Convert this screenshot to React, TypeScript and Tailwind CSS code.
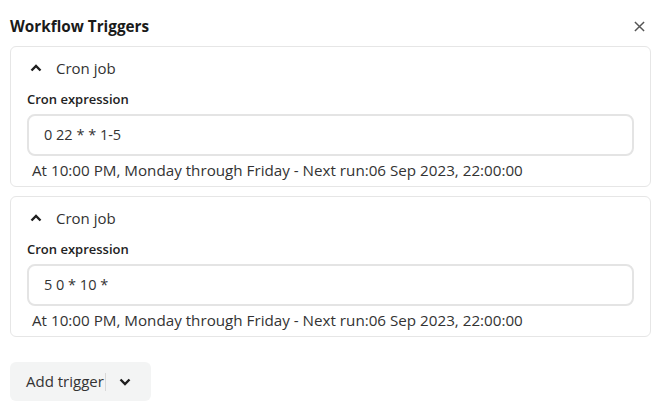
function ChevronUp({ className }: { className?: string }) {
  return (
    <svg viewBox="0 0 12 8" className={className} fill="none" stroke="currentColor" strokeWidth="2.4">
      <path d="M1.5 6.5 6 2l4.5 4.5" />
    </svg>
  );
}

function ChevronDown({ className }: { className?: string }) {
  return (
    <svg viewBox="0 0 12 8" className={className} fill="none" stroke="currentColor" strokeWidth="2.4">
      <path d="M1.5 1.5 6 6l4.5-4.5" />
    </svg>
  );
}

function CronCard({ value }: { value: string }) {
  return (
    <div className="rounded-md border border-[#e6e6e6] px-4 pb-[6px]">
      <div className="flex h-[42px] items-center gap-[14px] pl-[3px]">
        <ChevronUp className="h-[8px] w-[12px] text-[#1f1f1f]" />
        <span className="text-[15px] text-[#333]">Cron job</span>
      </div>
      <div className="text-[13px] font-semibold leading-[20px] text-[#222]">Cron expression</div>
      <div className="mt-[5px] flex h-[42px] items-center rounded-lg border-2 border-[#e4e4e4] px-[15px] text-[14.5px] text-[#333]">
        {value}
      </div>
      <div className="mt-[4px] pl-[5px] text-[15.2px] leading-[20px] text-[#333]">
        At 10:00 PM, Monday through Friday - Next run:06 Sep 2023, 22:00:00
      </div>
    </div>
  );
}

export default function App() {
  return (
    <div
      className="h-[413px] w-[664px] bg-white px-[10px]"
      style={{ fontFamily: '"Open Sans", "Noto Sans", sans-serif' }}
    >
      <div className="flex h-[46px] items-center justify-between pt-[6px] pr-[9px]">
        <h1 className="text-[15.3px] font-bold text-[#1a1a1a]">Workflow Triggers</h1>
        <svg viewBox="0 0 12 12" className="h-[11px] w-[11px] text-[#555]" fill="none" stroke="currentColor" strokeWidth="1.6">
          <path d="M1 1l10 10M11 1 1 11" />
        </svg>
      </div>
      <div className="flex w-[641px] flex-col gap-[9px]">
        <CronCard value="0 22 * * 1-5" />
        <CronCard value="5 0 * 10 *" />
      </div>
      <button className="mt-[25px] flex h-[39px] w-[141px] items-center rounded-md bg-[#f3f4f4] pl-4 text-[15px] text-[#333]">
        <span>Add trigger</span>
        <span className="ml-[1px] h-[18px] w-px bg-[#d8d8d8]" />
        <ChevronDown className="ml-[13px] h-[8px] w-[12px] text-[#1f1f1f]" />
      </button>
    </div>
  );
}
